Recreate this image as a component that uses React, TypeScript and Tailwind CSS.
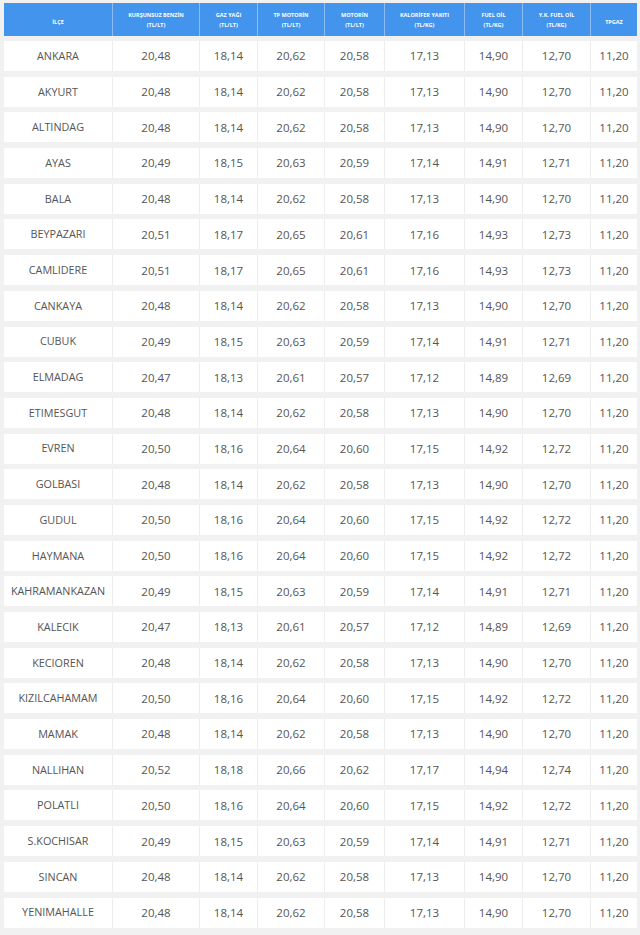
import React from "react";

const headers: [string, string?][] = [
  ["İLÇE"],
  ["KURŞUNSUZ BENZİN", "(TL/LT)"],
  ["GAZ YAĞI", "(TL/LT)"],
  ["TP MOTORİN", "(TL/LT)"],
  ["MOTORİN", "(TL/LT)"],
  ["KALORİFER YAKITI", "(TL/KG)"],
  ["FUEL OİL", "(TL/KG)"],
  ["Y.K. FUEL OİL", "(TL/KG)"],
  ["TPGAZ"],
];

const rows: string[][] = [
  ["ANKARA", "20,48", "18,14", "20,62", "20,58", "17,13", "14,90", "12,70", "11,20"],
  ["AKYURT", "20,48", "18,14", "20,62", "20,58", "17,13", "14,90", "12,70", "11,20"],
  ["ALTINDAG", "20,48", "18,14", "20,62", "20,58", "17,13", "14,90", "12,70", "11,20"],
  ["AYAS", "20,49", "18,15", "20,63", "20,59", "17,14", "14,91", "12,71", "11,20"],
  ["BALA", "20,48", "18,14", "20,62", "20,58", "17,13", "14,90", "12,70", "11,20"],
  ["BEYPAZARI", "20,51", "18,17", "20,65", "20,61", "17,16", "14,93", "12,73", "11,20"],
  ["CAMLIDERE", "20,51", "18,17", "20,65", "20,61", "17,16", "14,93", "12,73", "11,20"],
  ["CANKAYA", "20,48", "18,14", "20,62", "20,58", "17,13", "14,90", "12,70", "11,20"],
  ["CUBUK", "20,49", "18,15", "20,63", "20,59", "17,14", "14,91", "12,71", "11,20"],
  ["ELMADAG", "20,47", "18,13", "20,61", "20,57", "17,12", "14,89", "12,69", "11,20"],
  ["ETIMESGUT", "20,48", "18,14", "20,62", "20,58", "17,13", "14,90", "12,70", "11,20"],
  ["EVREN", "20,50", "18,16", "20,64", "20,60", "17,15", "14,92", "12,72", "11,20"],
  ["GOLBASI", "20,48", "18,14", "20,62", "20,58", "17,13", "14,90", "12,70", "11,20"],
  ["GUDUL", "20,50", "18,16", "20,64", "20,60", "17,15", "14,92", "12,72", "11,20"],
  ["HAYMANA", "20,50", "18,16", "20,64", "20,60", "17,15", "14,92", "12,72", "11,20"],
  ["KAHRAMANKAZAN", "20,49", "18,15", "20,63", "20,59", "17,14", "14,91", "12,71", "11,20"],
  ["KALECIK", "20,47", "18,13", "20,61", "20,57", "17,12", "14,89", "12,69", "11,20"],
  ["KECIOREN", "20,48", "18,14", "20,62", "20,58", "17,13", "14,90", "12,70", "11,20"],
  ["KIZILCAHAMAM", "20,50", "18,16", "20,64", "20,60", "17,15", "14,92", "12,72", "11,20"],
  ["MAMAK", "20,48", "18,14", "20,62", "20,58", "17,13", "14,90", "12,70", "11,20"],
  ["NALLIHAN", "20,52", "18,18", "20,66", "20,62", "17,17", "14,94", "12,74", "11,20"],
  ["POLATLI", "20,50", "18,16", "20,64", "20,60", "17,15", "14,92", "12,72", "11,20"],
  ["S.KOCHISAR", "20,49", "18,15", "20,63", "20,59", "17,14", "14,91", "12,71", "11,20"],
  ["SINCAN", "20,48", "18,14", "20,62", "20,58", "17,13", "14,90", "12,70", "11,20"],
  ["YENIMAHALLE", "20,48", "18,14", "20,62", "20,58", "17,13", "14,90", "12,70", "11,20"],
];

const gridCols = "grid grid-cols-[108px_87px_58px_67px_60px_80px_58px_68px_47px]";

export default function App() {
  return (
    <div
      className="w-[640px] h-[935px] bg-[#f1f1f1] pl-[4px] pt-[3px] overflow-hidden"
      style={{ fontFamily: '"Open Sans", "Noto Sans", sans-serif' }}
    >
      <div className="w-[633px] flex flex-col gap-[5.7px]">
        <div className={`${gridCols} h-[33px] bg-[#4394ec]`}>
          {headers.map(([a, b], i) => (
            <div
              key={i}
              className={`flex flex-col items-center justify-center text-white font-bold text-[5.5px] leading-[10px] text-center ${
                i > 0 ? "border-l border-[#8dbdf2]" : ""
              } ${b ? "" : "pt-[4px]"}`}
            >
              <span>{a}</span>
              {b && <span>{b}</span>}
            </div>
          ))}
        </div>
        <div className="flex flex-col gap-[5.7px] mt-[-0.7px]">
          {rows.map((r, ri) => (
            <div key={ri} className={`${gridCols} h-[30px] bg-white`}>
              {r.map((c, ci) => (
                <div
                  key={ci}
                  className={`flex items-center justify-center text-[#555555] ${
                    ci > 0 ? "border-l border-[#ededed] text-[11.5px]" : "text-[10.8px]"
                  }`}
                >
                  {c}
                </div>
              ))}
            </div>
          ))}
        </div>
      </div>
    </div>
  );
}
